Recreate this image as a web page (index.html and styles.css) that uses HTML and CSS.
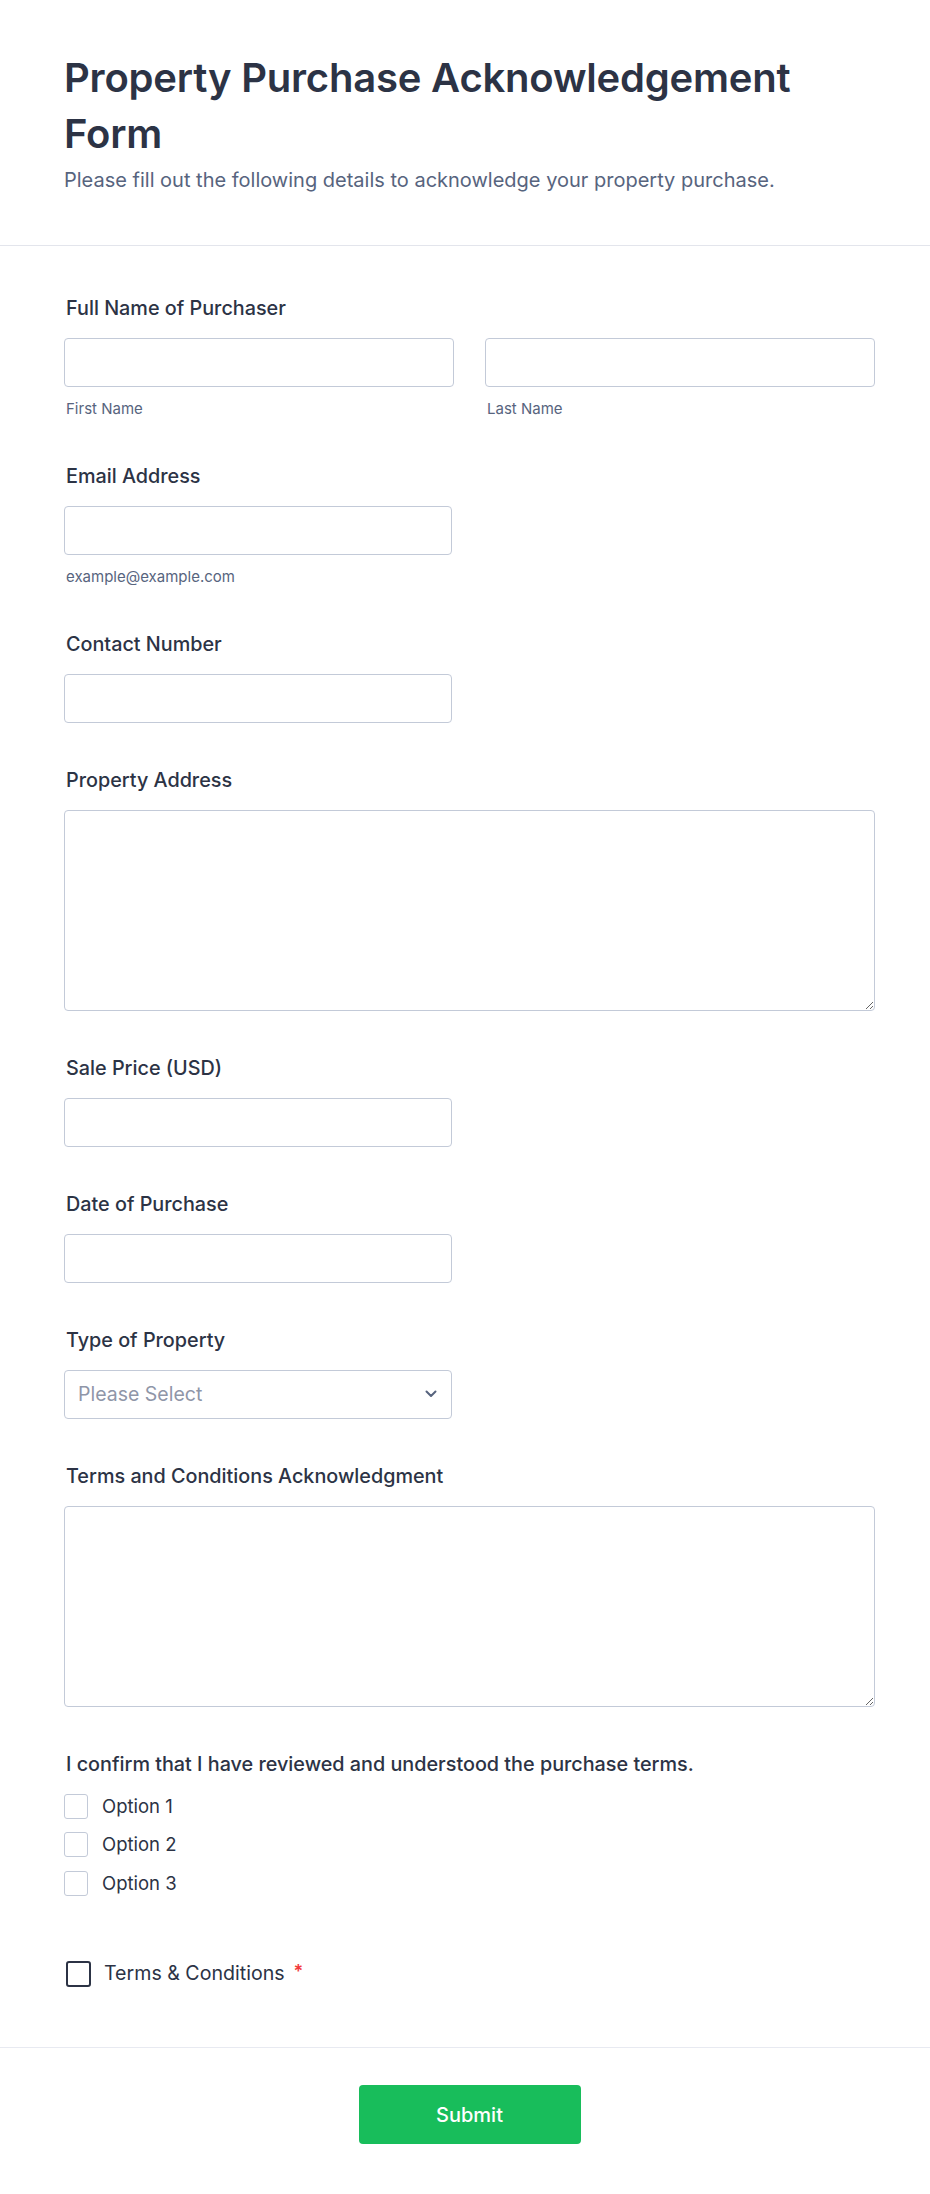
FILE: index.html
```html
<!DOCTYPE html>
<html lang="en">
<head>
<meta charset="utf-8">
<title>Property Purchase Acknowledgement Form</title>
<link rel="stylesheet" href="styles.css">
</head>
<body>
<div class="page">
  <header class="form-header">
    <h1 class="form-title">Property Purchase Acknowledgement Form</h1>
    <p class="form-subtitle">Please fill out the following details to acknowledge your property purchase.</p>
  </header>

  <main class="form-body">
    <div class="field">
      <label class="field-label">Full Name of Purchaser</label>
      <div class="name-row">
        <div class="name-col">
          <input class="text-input" type="text">
          <span class="sub-label">First Name</span>
        </div>
        <div class="name-col">
          <input class="text-input" type="text">
          <span class="sub-label">Last Name</span>
        </div>
      </div>
    </div>

    <div class="field">
      <label class="field-label">Email Address</label>
      <input class="text-input half" type="email">
      <span class="sub-label">example@example.com</span>
    </div>

    <div class="field">
      <label class="field-label">Contact Number</label>
      <input class="text-input half" type="tel">
    </div>

    <div class="field">
      <label class="field-label">Property Address</label>
      <textarea class="text-area"></textarea>
    </div>

    <div class="field">
      <label class="field-label">Sale Price (USD)</label>
      <input class="text-input half" type="text">
    </div>

    <div class="field">
      <label class="field-label">Date of Purchase</label>
      <input class="text-input half" type="text">
    </div>

    <div class="field">
      <label class="field-label">Type of Property</label>
      <div class="select-box half">
        <span class="select-placeholder">Please Select</span>
        <svg class="select-chevron" width="12" height="8" viewBox="0 0 12 8" aria-hidden="true">
          <path d="M1.5 1.5 L6 6 L10.5 1.5" fill="none" stroke="#57647e" stroke-width="2" stroke-linecap="round" stroke-linejoin="round"/>
        </svg>
      </div>
    </div>

    <div class="field">
      <label class="field-label">Terms and Conditions Acknowledgment</label>
      <textarea class="text-area"></textarea>
    </div>

    <div class="field">
      <label class="field-label">I confirm that I have reviewed and understood the purchase terms.</label>
      <div class="options">
        <div class="option"><span class="check-box"></span><span class="option-text">Option 1</span></div>
        <div class="option"><span class="check-box"></span><span class="option-text">Option 2</span></div>
        <div class="option"><span class="check-box"></span><span class="option-text">Option 3</span></div>
      </div>
    </div>

    <div class="terms-row">
      <span class="check-box dark"></span>
      <span class="terms-text">Terms &amp; Conditions</span>
      <span class="required">*</span>
    </div>
  </main>

  <footer class="form-footer">
    <button class="submit-btn" type="button">Submit</button>
  </footer>
</div>
</body>
</html>
```

FILE: styles.css
```css
* {
  box-sizing: border-box;
}

html, body {
  margin: 0;
  padding: 0;
  background: #ffffff;
}

body {
  font-family: Inter, "Noto Sans", "Liberation Sans", sans-serif;
  color: #2c3345;
}

.page {
  width: 930px;
}

.form-header {
  padding: 50px 55px 50px 64px;
  border-bottom: 1px solid #e3e5ec;
}

.form-title {
  margin: 0;
  max-width: 760px;
  font-size: 40px;
  line-height: 56px;
  font-weight: 600;
  letter-spacing: -0.2px;
  color: #2c3345;
}

.form-subtitle {
  margin: 3px 0 0;
  font-size: 20px;
  line-height: 30px;
  font-weight: 400;
  color: #57647e;
}

.form-body {
  padding: 47px 55px 60px 64px;
  display: flex;
  flex-direction: column;
  gap: 42.5px;
}

.field {
  display: flex;
  flex-direction: column;
  align-items: flex-start;
}

.field-label {
  display: block;
  padding-left: 2px;
  font-size: 19.8px;
  line-height: 30px;
  font-weight: 500;
  color: #2c3345;
  margin-bottom: 14.5px;
}

.name-row {
  display: flex;
  gap: 31px;
  width: 100%;
}

.name-col {
  flex: 1;
  display: flex;
  flex-direction: column;
}

.text-input {
  display: block;
  width: 100%;
  height: 49px;
  margin: 0;
  border: 1px solid #c3cad8;
  border-radius: 4px;
  background: #ffffff;
  font-family: inherit;
  font-size: 16px;
  padding: 0 12px;
  outline: none;
}

.half {
  width: 388px;
}

.sub-label {
  display: block;
  margin-top: 12px;
  padding-left: 2px;
  font-size: 15px;
  line-height: 20px;
  color: #57647e;
}

.text-area {
  display: block;
  width: 100%;
  height: 201px;
  margin: 0;
  border: 1px solid #c3cad8;
  border-radius: 4px;
  background: #ffffff;
  font-family: inherit;
  font-size: 16px;
  padding: 10px 12px;
  resize: both;
  outline: none;
}

.select-box {
  height: 49px;
  border: 1px solid #c3cad8;
  border-radius: 4px;
  background: #ffffff;
  display: flex;
  align-items: center;
  justify-content: space-between;
  padding: 0 14px 0 13px;
}

.select-placeholder {
  font-size: 19.5px;
  line-height: 27px;
  color: #8f96a8;
}

.select-chevron {
  display: block;
}

.options {
  margin-top: 0;
  display: flex;
  flex-direction: column;
  gap: 13.5px;
}

.option {
  display: flex;
  align-items: center;
  height: 25px;
}

.check-box {
  display: block;
  flex: none;
  width: 24px;
  height: 25px;
  border: 1px solid #c3cad8;
  border-radius: 3px;
  background: #ffffff;
}

.option-text {
  margin-left: 14px;
  font-size: 18.5px;
  line-height: 25px;
  color: #2c3345;
}

.terms-row {
  margin-top: 22px;
  display: flex;
  align-items: center;
  padding-left: 2px;
}

.check-box.dark {
  width: 25px;
  height: 26px;
  border: 2px solid #2c3345;
  border-radius: 3px;
}

.terms-text {
  margin-left: 13px;
  font-size: 19.6px;
  line-height: 27px;
  color: #2c3345;
}

.required {
  margin-left: 9px;
  align-self: flex-start;
  margin-top: -2px;
  font-size: 18px;
  line-height: 27px;
  font-weight: 600;
  color: #f23a3c;
}

.form-footer {
  border-top: 1px solid #e8eaf1;
  padding: 37px 55px 50px 64px;
  display: flex;
  justify-content: center;
}

.submit-btn {
  width: 222px;
  height: 59px;
  border: none;
  border-radius: 4px;
  background: #18bd5b;
  color: #ffffff;
  font-family: inherit;
  font-size: 20px;
  font-weight: 500;
  cursor: pointer;
}
```
